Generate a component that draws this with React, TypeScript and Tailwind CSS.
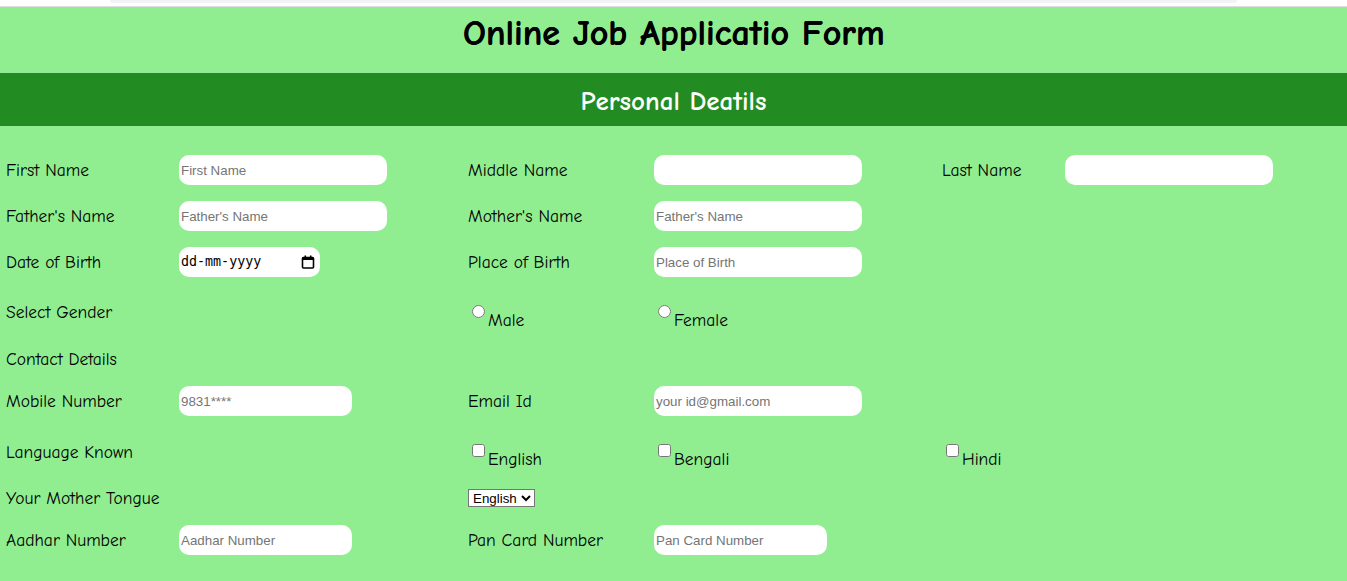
import React from 'react';

const labelFont = { fontFamily: '"Comic Sans MS", "Comic Neue", cursive' };

function Label({ children }: { children: React.ReactNode }) {
  return <span className="text-[17.5px] text-black">{children}</span>;
}

function TextInput({ placeholder, width = 'w-[208px]', type = 'text' }: { placeholder?: string; width?: string; type?: string }) {
  return (
    <input
      type={type}
      placeholder={placeholder}
      className={`${width} h-[30px] rounded-[10px] bg-white px-[2px] text-[13.33px] text-black outline-none placeholder:text-[#757575]`}
      style={{ fontFamily: '"Liberation Sans", Arial, sans-serif' }}
    />
  );
}

// fake date field so the placeholder reads dd-mm-yyyy like the screenshot
function DateField() {
  return (
    <div className="flex h-[30px] w-[141px] items-center justify-between rounded-[10px] bg-white pl-[2px] pr-[5px]">
      <span className="text-[13.33px] text-black" style={{ fontFamily: '"DejaVu Sans Mono", monospace' }}>
        dd-mm-yyyy
      </span>
      <svg width="14" height="14" viewBox="0 0 14 14" fill="none">
        <rect x="1.5" y="2.5" width="11" height="10.5" rx="1" stroke="#000" strokeWidth="1.6" />
        <rect x="1.5" y="2.5" width="11" height="2.5" fill="#000" />
        <rect x="3.5" y="0.5" width="1.6" height="3" fill="#000" />
        <rect x="8.9" y="0.5" width="1.6" height="3" fill="#000" />
      </svg>
    </div>
  );
}

function Choice({ type, name, label, offset }: { type: 'radio' | 'checkbox'; name: string; label: string; offset: string }) {
  return (
    <span className={`flex items-start ${offset}`}>
      <input type={type} name={name} className="ml-[4px] mr-[3px] h-[13px] w-[13px]" />
      <span className="mt-[4px] text-[17.5px] leading-[22px]">{label}</span>
    </span>
  );
}

export default function App() {
  return (
    <div className="min-h-[581px] bg-[#90ee90]" style={labelFont}>
      {/* browser chrome strip */}
      <div className="h-[7px] bg-white border-b border-[#dddddd]">
        <div className="mx-[110px] h-[3px] rounded-b-[4px] bg-[#f1f3f4]" />
      </div>

      <h1 className="h-[66px] pt-[6px] text-center text-[36px] font-bold leading-[42px] text-black [text-shadow:0.5px_0_0_#000]">
        Online Job Applicatio Form
      </h1>

      <h2 className="flex h-[53px] items-center justify-center bg-[#228b22] pt-[5px] text-[27px] font-bold text-white">
        Personal Deatils
      </h2>

      <div className="pl-[6px] pt-[21px]">
        <div className="grid grid-cols-[173px_289px_186px_288px_123px_1fr]">
          <div className="flex h-[46px] items-center"><Label>First Name</Label></div>
          <div className="flex h-[46px] items-center"><TextInput placeholder="First Name" /></div>
          <div className="flex h-[46px] items-center"><Label>Middle Name</Label></div>
          <div className="flex h-[46px] items-center"><TextInput /></div>
          <div className="flex h-[46px] items-center"><Label>Last Name</Label></div>
          <div className="flex h-[46px] items-center"><TextInput /></div>

          <div className="flex h-[46px] items-center"><Label>Father's Name</Label></div>
          <div className="flex h-[46px] items-center"><TextInput placeholder="Father's Name" /></div>
          <div className="flex h-[46px] items-center"><Label>Mother's Name</Label></div>
          <div className="col-span-3 flex h-[46px] items-center"><TextInput placeholder="Father's Name" /></div>

          <div className="flex h-[46px] items-center"><Label>Date of Birth</Label></div>
          <div className="flex h-[46px] items-center"><DateField /></div>
          <div className="flex h-[46px] items-center"><Label>Place of Birth</Label></div>
          <div className="col-span-3 flex h-[46px] items-center"><TextInput placeholder="Place of Birth" /></div>

          <div className="flex h-[54px] items-center"><Label>Select Gender</Label></div>
          <div className="h-[54px]" />
          <div className="flex h-[54px] items-center"><Choice type="radio" name="gender" label="Male" offset="pt-[11px]" /></div>
          <div className="col-span-3 flex h-[54px] items-center"><Choice type="radio" name="gender" label="Female" offset="pt-[11px]" /></div>

          <div className="col-span-6 flex h-[40px] items-center"><Label>Contact Details</Label></div>

          <div className="flex h-[44px] items-center"><Label>Mobile Number</Label></div>
          <div className="flex h-[44px] items-center"><TextInput placeholder="9831****" width="w-[173px]" /></div>
          <div className="flex h-[44px] items-center"><Label>Email Id</Label></div>
          <div className="col-span-3 flex h-[44px] items-center"><TextInput placeholder="your id@gmail.com" type="email" /></div>

          <div className="flex h-[58px] items-center"><Label>Language Known</Label></div>
          <div className="h-[58px]" />
          <div className="flex h-[58px] items-center"><Choice type="checkbox" name="eng" label="English" offset="pt-[10px]" /></div>
          <div className="flex h-[58px] items-center"><Choice type="checkbox" name="ben" label="Bengali" offset="pt-[10px]" /></div>
          <div className="col-span-2 flex h-[58px] items-center"><Choice type="checkbox" name="hin" label="Hindi" offset="pt-[10px]" /></div>

          <div className="flex h-[34px] items-center"><Label>Your Mother Tongue</Label></div>
          <div className="h-[34px]" />
          <div className="col-span-4 flex h-[34px] items-center">
            <select
              className="h-[18px] border border-[#767676] bg-white text-[13.33px] text-black"
              style={{ fontFamily: '"Liberation Sans", Arial, sans-serif' }}
              defaultValue="English"
            >
              <option>English</option>
              <option>Bengali</option>
              <option>Hindi</option>
            </select>
          </div>

          <div className="flex h-[50px] items-center"><Label>Aadhar Number</Label></div>
          <div className="flex h-[50px] items-center"><TextInput placeholder="Aadhar Number" width="w-[173px]" /></div>
          <div className="flex h-[50px] items-center"><Label>Pan Card Number</Label></div>
          <div className="col-span-3 flex h-[50px] items-center"><TextInput placeholder="Pan Card Number" width="w-[173px]" /></div>
        </div>
      </div>
    </div>
  );
}
